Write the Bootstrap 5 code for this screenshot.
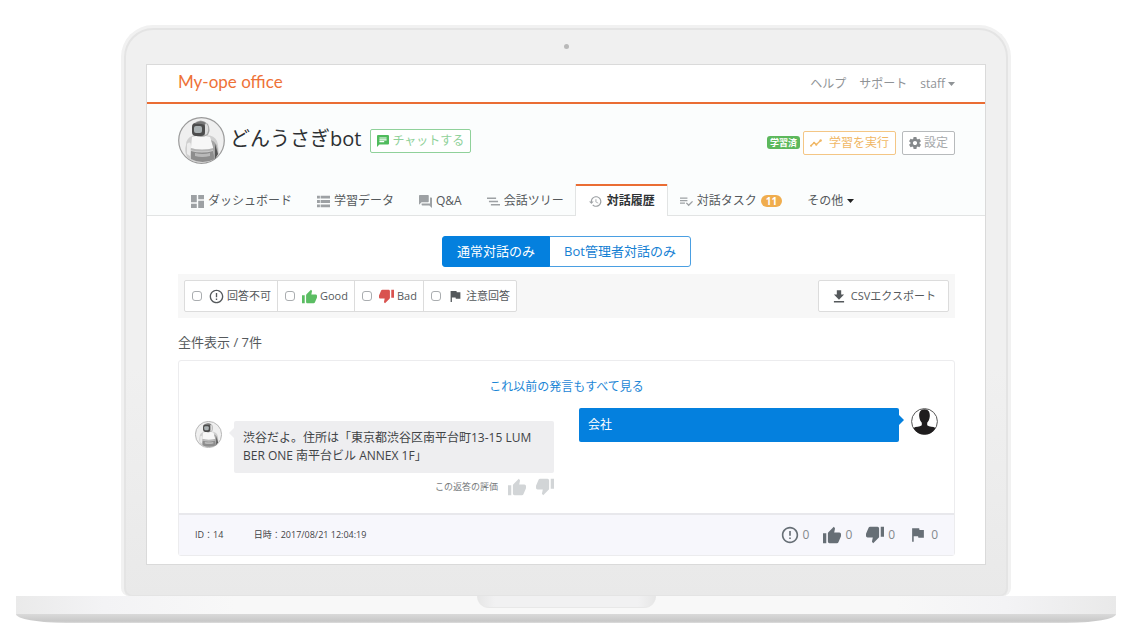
<!DOCTYPE html>
<html lang="ja">
<head>
<meta charset="utf-8">
<meta name="viewport" content="width=device-width, initial-scale=1">
<title>My-ope office</title>
<link href="https://cdn.jsdelivr.net/npm/bootstrap@5.3.0/dist/css/bootstrap.min.css" rel="stylesheet">
<style>
  body { font-family: "Open Sans", "Noto Sans CJK JP", sans-serif; font-size: 12px; line-height: 18px; color: #55595c; background: #fff; }
  a { text-decoration: none; }
  svg { fill: currentColor; flex: none; }
  .ic-xs { width: 12px; height: 12px; }
  .ic-s { width: 13px; height: 13px; }
  .ic-m { width: 16px; height: 16px; }
  .ic-l { width: 18px; height: 18px; }
  .good { color: #5bbd63; }
  .bad { color: #d9534f; }

  /* laptop */
  .laptop { padding: 25px 17px 0 16px; }
  .lid { margin: 0 105px; border: 3px solid #f1f1f1; border-bottom: 0; border-radius: 32px 32px 8px 8px; background: linear-gradient(#f0f0f0 60%, #e9e9e9); }
  .lid-inner { border: 2px solid #e4e4e4; border-bottom-width: 1px; border-radius: 29px 29px 8px 8px; padding: 0 20px 30px; }
  .camera-row { height: 34px; padding-top: 14px; }
  .camera { width: 5px; height: 5px; background: #b9b9b9; }
  .display { border: 1px solid #dadada; background: #fff; }
  .deck { height: 18px; background: linear-gradient(90deg, #eaeaea, #f3f3f5 8%, #f8f8f8 20%, #f8f8f8 80%, #f3f3f5 90%, #e9e9e9); }
  .notch { width: 179px; height: 12px; border-radius: 0 0 16px 16px; background: linear-gradient(90deg, #e6e6e6, #f1f1f2 10%, #f1f1f2 90%, #e6e6e6); border-bottom: 1px solid #e8e8e8; }
  .under { height: 9px; background: linear-gradient(#dadada, #c8c8c8 80%, #dedede); border-radius: 0 0 50px 50px / 0 0 9px 9px; }

  /* application */
  .gutter { padding-left: 31px; padding-right: 30px; }
  .topbar { height: 39px; border-bottom: 2px solid #ea6d34; }
  .brand { font-family: Lato, "Open Sans", sans-serif; font-size: 17px; line-height: 20px; color: #ee7238; }
  .topbar .menu { gap: 13px; }
  .topbar .menu a { color: #8f9396; }
  .topbar .caret { margin-left: 3px; }
  .head { background: #fbfdfd; border-bottom: 1px solid #e2e4e4; }
  .bot-row { padding-top: 9px; margin-bottom: 20px; }
  .bot-title { font-size: 20px; line-height: 28px; color: #2d3033; font-weight: 400; margin: 0 9px 4px 5px; }
  .tool-row { gap: 6px; }
  .tool { display: inline-flex; align-items: center; gap: 3px; height: 24px; padding: 0 6px; font-size: 12px; line-height: 18px; border-radius: 2px; background: #fff; }
  .tool-green { border-color: #8fd19a; color: #8fd19a; }
  .tool-green svg { color: #4fbb5c; }
  .tool-orange { border-color: #f4c685; color: #f0b765; }
  .tool-gray { border-color: #b7babc; color: #a5a8aa; }
  .tool-gray svg { color: #85898c; }
  .done { font-size: 9px; line-height: 13px; padding: 0 3px; background: #5cb85c; border-radius: 3px; margin-right: -3px; }
  .tabs .nav-link { display: flex; align-items: center; gap: 4px; height: 32px; padding: 0 12px 0 13px; border: 0 solid transparent; border-top-width: 2px; border-radius: 0; margin-bottom: -1px; color: #55595c; }
  .tabs .nav-link svg { color: #9da1a4; }
  .tabs .nav-link svg.caret { color: #222; }
  .tabs .nav-link.active { gap: 5px; color: #2f3336; background: #fff; font-weight: 600; border-top-color: #ea6d34; box-shadow: -1px 0 #e2e4e4, 1px 0 #e2e4e4; }
  .count { font-size: 10px; line-height: 12px; padding: 0 5px; background: #f0ad4e; }
  .caret { width: 7px; height: 4px; }
  .switch { margin: 20px 0 7px; }
  .switch .btn { font-size: 13px; line-height: 17px; padding: 6px 14px; border-radius: 3px; border-color: #4a9fe2; color: #1480d3; }
  .switch .btn-check:checked + .btn { background: #0480de; border-color: #0480de; color: #fff; }
  .filterbar { background: #f7f7f7; padding: 6px; }
  .filters, .csv { border: 1px solid #dcdcdc; border-radius: 2px; background: #fff; font-size: 11px; }
  .filters label { display: flex; align-items: center; gap: 3px; height: 30px; padding: 0 6px 0 7px; }
  .filters label + label { border-left: 1px solid #dcdcdc; }
  .filters .form-check-input { width: 10px; height: 10px; margin: 0 4px 0 0; border-color: #aaadb0; border-radius: 3px; }
  .filters svg { width: 15px; height: 15px; }
  .csv { height: 32px; padding: 0 12px; color: #55595c; }
  .total { font-size: 13px; line-height: 20px; margin: 14px 0 8px; font-weight: 400; }
  .thread { border: 1px solid #ececee; border-radius: 3px; }
  .thread-link { color: #1c86d6; }
  .chat { padding: 17px 16px; }
  .chat-cols { gap: 25px; margin-top: 12px; }
  .side { flex: 1 1 0; min-width: 0; }
  .bubble { position: relative; flex: 1; border-radius: 2px; padding: 8px 9px; }
  .bot-line { margin-top: 13px; }
  .bubble-bot { background: #eeeef0; color: #3f4346; }
  .bubble-user { background: #0480de; color: #fff; }
  .bubble::after { content: ""; position: absolute; border: 5px solid transparent; top: 7px; }
  .bubble-bot::after { right: 100%; border-right-color: #eeeef0; }
  .bubble-user::after { left: 100%; border-left-color: #0480de; }
  .rate { font-size: 9px; color: #777b7e; gap: 10px; height: 19px; margin-top: 4px; }
  .rate button { color: #d2d5d7; line-height: 1; }
  .meta { font-size: 9px; height: 42px; padding: 0 16px; background: #f7f7fc; border-top: 2px solid #e8e8ec; color: #3f4346; }
  .stamp { margin-left: 28px; }
  .stats { font-size: 12px; color: #85898c; gap: 14px; }
  .stats svg { color: #676f76; }
</style>
</head>
<body>
<svg class="d-none" aria-hidden="true">
  <symbol id="dash" viewBox="3 3 18 18"><path d="M3 13h8V3H3v10zm0 8h8v-6H3v6zm10 0h8V11h-8v10zm0-18v6h8V3h-8z"/></symbol>
  <symbol id="list" viewBox="3 3 18 18"><path d="M3 8h4V4H3v4zm0 6h4v-4H3v4zm0 6h4v-4H3v4zM8 8h13V4H8v4zm0 6h13v-4H8v4zm0 6h13v-4H8v4z"/></symbol>
  <symbol id="forum" viewBox="2 2 20 20"><path d="M21 6h-2v9H6v2c0 .55.45 1 1 1h11l4 4V7c0-.55-.45-1-1-1zm-4 6V3c0-.55-.45-1-1-1H3c-.55 0-1 .45-1 1v14l4-4h10c.55 0 1-.45 1-1z"/></symbol>
  <symbol id="tree" viewBox="2 2 20 20"><path d="M2 6h14v2H2zM5 11h14v2H5zM8 16h14v2H8z"/></symbol>
  <symbol id="history" viewBox="1 1 22 22"><path d="M13 3c-4.97 0-9 4.03-9 9H1l3.89 3.89.07.14L9 12H6c0-3.87 3.13-7 7-7s7 3.13 7 7-3.13 7-7 7c-1.93 0-3.68-.79-4.94-2.06l-1.42 1.42C8.27 19.99 10.51 21 13 21c4.97 0 9-4.03 9-9s-4.03-9-9-9zm-1 5v5l4.28 2.54.72-1.21-3.5-2.08V8H12z"/></symbol>
  <symbol id="task" viewBox="2 2 21 21"><path d="M14 10H2v2h12v-2zm0-4H2v2h12V6zM2 16h8v-2H2v2zm19.500-4.500L23 13l-6.990 7-4.510-4.500L13 14l3.010 3 5.490-5.500z"/></symbol>
  <symbol id="chat" viewBox="2 2 20 20"><path d="M20 2H4c-1.100 0-1.990.9-1.990 2L2 22l4-4h14c1.100 0 2-.9 2-2V4c0-1.100-.9-2-2-2zM6 6h12v2H6zM6 9h12v2H6zM6 12h8v2H6z" fill-rule="evenodd"/></symbol>
  <symbol id="trend" viewBox="1 1 22 22"><path d="M2.500 17l6-5.500 4 3.500 8-7.500" fill="none" stroke="currentColor" stroke-width="2.500"/><circle cx="3" cy="17" r="2"/><circle cx="8.500" cy="11.500" r="2"/><circle cx="12.500" cy="15" r="2"/><circle cx="20.500" cy="7.500" r="2.200"/></symbol>
  <symbol id="gear" viewBox="2 2 20 20"><path d="M19.430 12.980c.04-.32.07-.64.07-.98s-.03-.66-.07-.98l2.110-1.650c.19-.15.24-.42.12-.64l-2-3.460c-.12-.22-.39-.3-.61-.22l-2.490 1c-.52-.4-1.080-.73-1.690-.98l-.38-2.650C14.460 2.180 14.250 2 14 2h-4c-.25 0-.46.18-.49.42l-.38 2.650c-.61.25-1.170.59-1.690.98l-2.490-1c-.23-.09-.49 0-.61.22l-2 3.460c-.13.22-.07.49.12.64l2.110 1.650c-.04.32-.07.65-.07.98s.03.66.07.98l-2.110 1.650c-.19.15-.24.42-.12.64l2 3.460c.12.22.39.3.61.22l2.490-1c.52.4 1.080.73 1.690.98l.38 2.650c.03.24.24.42.49.42h4c.25 0 .46-.18.49-.42l.38-2.650c.61-.25 1.170-.59 1.690-.98l2.490 1c.23.09.49 0 .61-.22l2-3.460c.12-.22.07-.49-.12-.64l-2.110-1.650zM12 15.500c-1.930 0-3.500-1.570-3.500-3.500s1.570-3.500 3.500-3.500 3.500 1.570 3.500 3.500-1.570 3.500-3.500 3.500z"/></symbol>
  <symbol id="alert" viewBox="1 1 22 22"><path d="M11 15h2v2h-2zm0-8h2v6h-2zm.99-5C6.470 2 2 6.480 2 12s4.470 10 9.990 10C17.520 22 22 17.520 22 12S17.520 2 11.990 2zM12 20c-4.420 0-8-3.580-8-8s3.580-8 8-8 8 3.580 8 8-3.580 8-8 8z"/></symbol>
  <symbol id="up" viewBox="1 0 22 22"><path d="M1 21h4V9H1v12zm22-11c0-1.100-.9-2-2-2h-6.310l.95-4.570.03-.32c0-.41-.17-.79-.44-1.060L14.170 1 7.590 7.590C7.220 7.950 7 8.450 7 9v10c0 1.100.9 2 2 2h9c.83 0 1.540-.5 1.840-1.220l3.020-7.050c.09-.23.14-.47.14-.73v-2z"/></symbol>
  <symbol id="down" viewBox="1 2 22 22"><path d="M15 3H6c-.83 0-1.540.5-1.840 1.220l-3.020 7.050c-.09.23-.14.47-.14.73v2c0 1.100.9 2 2 2h6.310l-.95 4.570-.03.32c0 .41.17.79.44 1.060L9.830 23l6.590-6.590c.36-.36.58-.86.58-1.410V5c0-1.100-.9-2-2-2zm4 0v12h4V3h-4z"/></symbol>
  <symbol id="flag" viewBox="1 1 23 23"><path d="M14.400 6L14 4H5v17h2v-7h5.600l.4 2h7V6z"/></symbol>
  <symbol id="download" viewBox="1 0 22 22"><path d="M19 9h-4V3H9v6H5l7 7 7-7zM5 18v2h14v-2H5z"/></symbol>
  <symbol id="tri" viewBox="0 0 7 4"><path d="M0 0h7L3.500 4z"/></symbol>
  <symbol id="robot" viewBox="0 0 47 47">
    <circle cx="23.500" cy="23.500" r="22.800" fill="#efefef" stroke="#9a9a9a" stroke-width="1.200"/>
    <path d="M8 28q0-7 7-9.500h17q7 2 8 9l1 10q-7 8-17 8T9 40q-3-6-1-12z" fill="#cfcfcf"/>
    <path d="M14 20q9-3 18 0l4 11q-12 4-23 0z" fill="#f7f7f7"/>
    <path d="M12 31q12 3 24 0v2q-12 3-24 0z" fill="#b4b4b4"/>
    <path d="M13 34q11 3 22 0l2 8q-13 6-24 0z" fill="#8d8d8d"/>
    <path d="M17 36q8 2 15 0v3q-8 2-15 0z" fill="#b9b9b9"/>
    <path d="M9 27q4-4 4 3l-1 9-3-2z" fill="#ececec"/>
    <path d="M33 23q7 2 7 14l-4 5-1-12z" fill="#a5a5a5"/>
    <path d="M37 27l3 10-3 5z" fill="#555"/>
    <path d="M15 7q8-7 15 0 3 6 0 11-7 4-14 0-3-5-1-11z" fill="#a8a8a8"/>
    <rect x="14" y="6" width="13" height="13" rx="4" fill="#4c4c4c"/>
    <rect x="16" y="9" width="8" height="7" rx="2" fill="#a9b0b2"/>
    <path d="M16 7q6-5 12-1l-1 2q-5-2-11-1z" fill="#777"/>
    <path d="M28 6q4 5 1 11l-2 1V8z" fill="#ddd"/>
  </symbol>
  <symbol id="person" viewBox="0 0 27 27">
    <circle cx="13.500" cy="13.500" r="12.900" fill="#fff" stroke="#555"/>
    <path d="M13.500 1.300c4 0 5.600 3 5.300 7-.2 3-1.400 5.200-2.600 6.500v2.500c2 1.600 6 1.200 8.300 2.700A12.500 12.500 0 0 1 2.500 20c2.300-1.500 6.300-1.100 8.300-2.700v-2.500C9.600 13.500 8.400 11.300 8.200 8.300c-.3-4 1.300-7 5.300-7z" fill="#1f1d1e"/>
  </symbol>
</svg>

<div class="laptop">
  <div class="lid"><div class="lid-inner">
    <div class="camera-row"><div class="camera rounded-circle mx-auto"></div></div>
    <main class="display">
      <header class="topbar gutter d-flex align-items-center justify-content-between">
        <a class="brand pb-1" href="#">My-ope office</a>
        <nav class="menu d-flex">
          <a href="#">ヘルプ</a>
          <a href="#">サポート</a>
          <a href="#" class="d-flex align-items-center">staff <svg class="caret"><use href="#tri"/></svg></a>
        </nav>
      </header>

      <section class="head">
        <div class="bot-row gutter d-flex justify-content-between align-items-center">
          <div class="d-flex align-items-center pt-1">
            <svg width="47" height="47" role="img" aria-label="bot"><use href="#robot"/></svg>
            <h1 class="bot-title">どんうさぎbot</h1>
            <button type="button" class="btn tool tool-green"><svg class="ic-xs"><use href="#chat"/></svg>チャットする</button>
          </div>
          <div class="tool-row d-flex align-items-center pt-2">
            <span class="badge done">学習済</span>
            <button type="button" class="btn tool tool-orange"><svg class="ic-xs me-1"><use href="#trend"/></svg>学習を実行</button>
            <button type="button" class="btn tool tool-gray"><svg class="ic-xs"><use href="#gear"/></svg>設定</button>
          </div>
        </div>
        <nav class="tabs nav gutter flex-nowrap text-nowrap">
          <a class="nav-link" href="#"><svg class="ic-s"><use href="#dash"/></svg>ダッシュボード</a>
          <a class="nav-link" href="#"><svg class="ic-s"><use href="#list"/></svg>学習データ</a>
          <a class="nav-link" href="#"><svg class="ic-s"><use href="#forum"/></svg>Q&amp;A</a>
          <a class="nav-link" href="#"><svg class="ic-s"><use href="#tree"/></svg>会話ツリー</a>
          <a class="nav-link active" href="#" aria-current="page"><svg class="ic-s"><use href="#history"/></svg>対話履歴</a>
          <a class="nav-link" href="#"><svg class="ic-s"><use href="#task"/></svg>対話タスク <span class="badge rounded-pill count">11</span></a>
          <a class="nav-link" href="#">その他 <svg class="caret"><use href="#tri"/></svg></a>
        </nav>
      </section>

      <section class="gutter pb-2">
        <div class="d-flex justify-content-center">
          <div class="btn-group switch" role="group" aria-label="対話の種類">
            <input type="radio" class="btn-check" name="kind" id="k1" checked><label class="btn" for="k1">通常対話のみ</label>
            <input type="radio" class="btn-check" name="kind" id="k2"><label class="btn" for="k2">Bot管理者対話のみ</label>
          </div>
        </div>
        <div class="filterbar d-flex justify-content-between align-items-start">
          <div class="filters d-flex">
            <label><input type="checkbox" class="form-check-input"><svg><use href="#alert"/></svg>回答不可</label>
            <label><input type="checkbox" class="form-check-input"><svg class="good"><use href="#up"/></svg>Good</label>
            <label><input type="checkbox" class="form-check-input"><svg class="bad"><use href="#down"/></svg>Bad</label>
            <label><input type="checkbox" class="form-check-input"><svg><use href="#flag"/></svg>注意回答</label>
          </div>
          <button type="button" class="csv d-flex align-items-center gap-1"><svg class="ic-m"><use href="#download"/></svg>CSVエクスポート</button>
        </div>

        <h2 class="total">全件表示 / 7件</h2>

        <article class="thread">
          <div class="chat">
            <div class="text-center"><a class="thread-link" href="#">これ以前の発言もすべて見る</a></div>
            <div class="chat-cols d-flex">
              <div class="side">
                <div class="bot-line d-flex align-items-start">
                  <svg width="27" height="27" class="me-2" role="img" aria-label="bot"><use href="#robot"/></svg>
                  <div class="bubble bubble-bot ms-1">渋谷だよ。住所は「東京都渋谷区南平台町13-15 LUM<br>BER ONE 南平台ビル ANNEX 1F」</div>
                </div>
                <div class="rate d-flex justify-content-end align-items-center">
                  この返答の評価
                  <button type="button" class="border-0 bg-transparent p-0" aria-label="Good"><svg class="ic-l"><use href="#up"/></svg></button>
                  <button type="button" class="border-0 bg-transparent p-0" aria-label="Bad"><svg class="ic-l"><use href="#down"/></svg></button>
                </div>
              </div>
              <div class="side d-flex align-items-start">
                <div class="bubble bubble-user me-1">会社</div>
                <svg width="27" height="27" class="ms-2" role="img" aria-label="user"><use href="#person"/></svg>
              </div>
            </div>
          </div>
          <footer class="meta d-flex align-items-center justify-content-between">
            <div><span>ID：14</span> <span class="stamp">日時：2017/08/21 12:04:19</span></div>
            <div class="stats d-flex">
              <span class="d-flex align-items-center gap-1"><svg class="ic-l"><use href="#alert"/></svg>0</span>
              <span class="d-flex align-items-center gap-1"><svg class="ic-l"><use href="#up"/></svg>0</span>
              <span class="d-flex align-items-center gap-1"><svg class="ic-l"><use href="#down"/></svg>0</span>
              <span class="d-flex align-items-center gap-1"><svg class="ic-l"><use href="#flag"/></svg>0</span>
            </div>
          </footer>
        </article>
      </section>
    </main>
  </div></div>
  <div class="deck"><div class="notch mx-auto"></div></div>
  <div class="under"></div>
</div>
<script src="https://cdn.jsdelivr.net/npm/bootstrap@5.3.0/dist/js/bootstrap.bundle.min.js"></script>
</body>
</html>
